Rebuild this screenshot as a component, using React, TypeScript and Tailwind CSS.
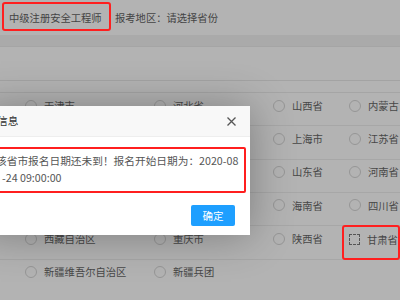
import React from "react";

const font = { fontFamily: '"Noto Sans CJK SC", "Liberation Sans", sans-serif' };

type Cell = { name: string; check?: boolean; mark?: boolean };

const rows: Cell[][] = [
    [{ name: "天津市" }, { name: "河北省" }, { name: "山西省" }, { name: "内蒙古自治区" }],
    [{ name: "吉林省" }, { name: "黑龙江省" }, { name: "上海市" }, { name: "江苏省" }],
    [{ name: "福建省" }, { name: "江西省" }, { name: "山东省" }, { name: "河南省" }],
    [{ name: "广西壮族自治区" }, { name: "广东省" }, { name: "海南省" }, { name: "四川省" }],
    [{ name: "西藏自治区" }, { name: "重庆市" }, { name: "陕西省" }, { name: "甘肃省", check: true, mark: true }],
    [{ name: "新疆维吾尔自治区" }, { name: "新疆兵团" }],
];

const Radio = ({ cell }: { cell: Cell }) => {
    const inner = (
        <div className="flex items-center h-[13px] gap-[7px] whitespace-nowrap">
            {cell.check
                ? <span className="w-[11px] h-[11px] border border-dashed border-[#555] shrink-0" />
                : <span className="w-[12px] h-[12px] rounded-full border border-[#969696] shrink-0" />}
            <span className="text-[10.3px] text-[#474747]">{cell.name}</span>
        </div>
    );
    if (cell.mark) {
        return (
            <div className="-ml-[7px] -mt-[1px] h-[35px] pl-[5px] pt-[6px] border-2 border-[#ff1f1f] rounded-[3px] overflow-hidden">
                {inner}
            </div>
        );
    }
    return <div className="pt-[6px] overflow-hidden">{inner}</div>;
};

const Dialog = () => (
    <div className="absolute left-[-20px] top-[106px] w-[270px] bg-white shadow-[1px_1px_40px_rgba(0,0,0,0.3)] z-20">
        <div className="h-[31px] flex items-center justify-between pl-[17px] pr-[14px] bg-[#f8f8f8] border-b border-[#eee]">
            <span className="text-[10.7px] text-[#333]">信息</span>
            <svg width="9" height="9" viewBox="0 0 9 9" className="shrink-0">
                <path d="M0.5 0.5 L8.5 8.5 M8.5 0.5 L0.5 8.5" stroke="#555" strokeWidth="1.3" />
            </svg>
        </div>
        <div className="pt-[10px] pb-[8px] pl-[10px] pr-[4px]">
            <div className="border-2 border-[#ff1f1f] rounded-[2px] pl-[10px] pt-[3px] pb-[5px] text-[10.7px] leading-[17px] text-[#555] whitespace-nowrap">
                <div className="-ml-[6px]">该省市报名日期还未到！报名开始日期为：2020-08</div>
                <div>-24 09:00:00</div>
            </div>
        </div>
        <div className="flex justify-end pr-[15px] pt-[4px] pb-[9px]">
            <button className="w-[44px] h-[21px] bg-[#1e9fff] text-white text-[10.5px] rounded-[2px]">确定</button>
        </div>
    </div>
);

export default function App() {
    return (
        <div className="relative w-[400px] h-[300px] overflow-hidden bg-[#b3b3b3]" style={font}>
            <div className="h-[35px] flex items-start">
                <div className="ml-[2px] mt-[2px] h-[29px] w-[109px] border-2 border-[#ff1f1f] rounded-[3px] pl-[5px] pt-[2px] flex items-center">
                    <span className="text-[10.3px] text-[#444] whitespace-nowrap">中级注册安全工程师</span>
                </div>
                <div className="ml-[4px] h-[33px] pt-[2px] flex items-center text-[10.3px] text-[#444] whitespace-nowrap">
                    报考地区：请选择省份
                </div>
            </div>
            <div className="h-[12px] bg-[#aaaaaa] border-b border-[#a5a5a5]" />
            <div className="h-[34px] border-b border-[#a3a3a3]" />
            <div className="h-[12px] border-b border-[#a5a5a5]" />
            {rows.map((row, i) => (
                <div
                    key={i}
                    className={`h-[33.33px] pl-[25px] grid grid-cols-[129px_119px_76px_1fr] ${i < rows.length - 1 ? "border-b border-[#a7a7a7]" : ""}`}
                >
                    {row.map((c) => <Radio key={c.name} cell={c} />)}
                </div>
            ))}
            <Dialog />
        </div>
    );
}
